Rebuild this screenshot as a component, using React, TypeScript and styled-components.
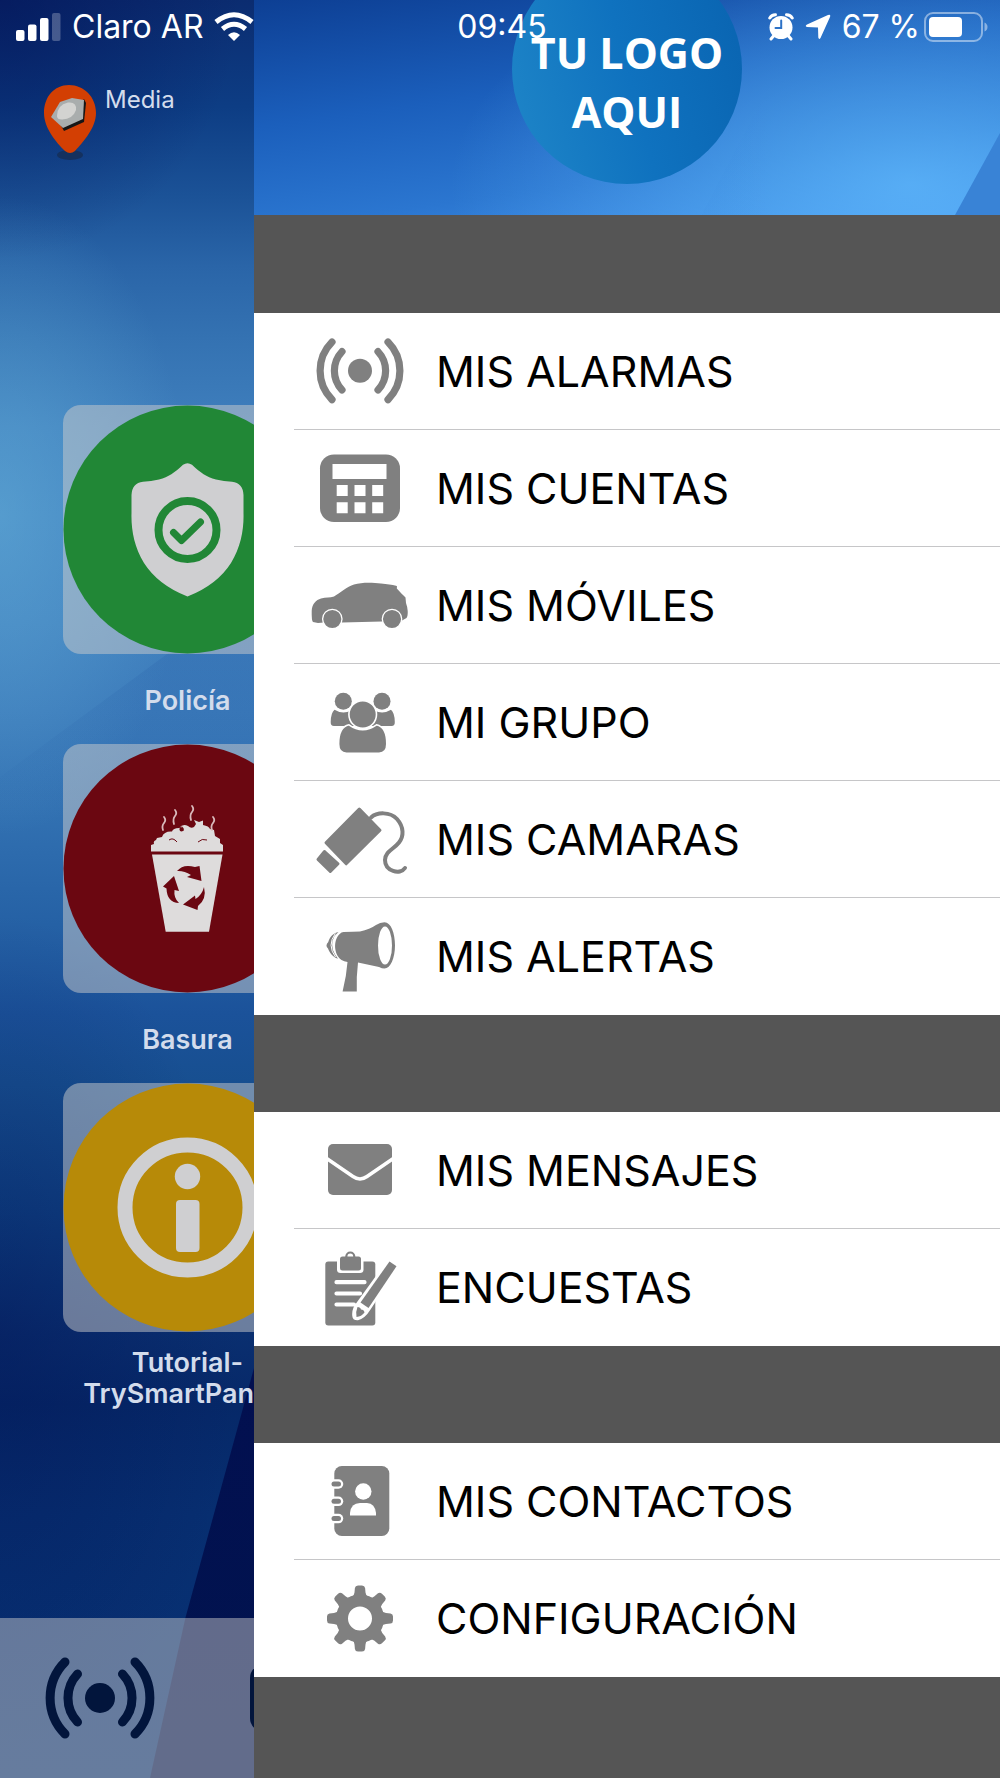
import React from "react";
import styled, { createGlobalStyle } from "styled-components";

const GREY = "#808080";
const PALE = "#cfcfd1";

const GlobalStyle = createGlobalStyle`
  * { box-sizing: border-box; }
  body { margin: 0; background: #555555; }
  body, button { font-family: Inter, "Liberation Sans", sans-serif; }
`;

const Screen = styled.div`
  position: relative;
  display: flex;
  min-height: 100vh;
  overflow: hidden;
`;

const StatusBar = styled.header`
  position: absolute;
  inset: 0 0 auto 0;
  z-index: 2;
  display: grid;
  grid-template-columns: 1fr auto 1fr;
  align-items: center;
  height: 54px;
  padding: 0 12px 0 16px;
  color: #ffffff;
  font-size: 32px;
  line-height: 36px;
`;

const StatusGroup = styled.div<{ $end?: boolean }>`
  display: flex;
  align-items: center;
  justify-content: ${(p) => (p.$end ? "flex-end" : "flex-start")};
  gap: 11px;
`;

const Charge = styled.div`
  display: flex;
  align-items: center;
  gap: 4px;
`;

const Home = styled.main`
  position: relative;
  flex: 0 0 254px;
  display: flex;
  flex-direction: column;
  overflow: hidden;
  color: #d3dcec;
  background: linear-gradient(
    180deg,
    #0b2c70 0%,
    #0d3d84 6%,
    #1b5297 11%,
    #2a65a8 15%,
    #3472b2 19%,
    #3f7fbd 24%,
    #4283c0 29%,
    #4080be 35%,
    #3b7aba 40%,
    #3170b1 46%,
    #2561a5 52%,
    #1b529a 57%,
    #174f90 61%,
    #0f4183 68%,
    #0a2f70 75%,
    #062868 79%,
    #072e70 85%,
    #083274 100%
  );
`;

const Shade = styled.div`
  position: absolute;
  inset: 0;
  background:
    radial-gradient(ellipse 190px 320px at 0 29%, rgba(104, 180, 220, 0.5), transparent),
    radial-gradient(ellipse 240px 260px at 0 0, rgba(0, 12, 80, 0.5), transparent),
    radial-gradient(ellipse 240px 420px at 0 75%, rgba(0, 14, 80, 0.35), transparent);
`;

const Streak = styled.div`
  position: absolute;
  top: 590px;
  right: 0;
  left: 0;
  height: 220px;
  background: linear-gradient(rgba(20, 70, 150, 0.18), transparent);
  clip-path: polygon(100% 0, 100% 100%, 0 100%, 0 85%);
`;

const Wedge = styled.div`
  position: absolute;
  right: 0;
  bottom: 0;
  width: 104px;
  height: 410px;
  background: linear-gradient(#020f50, #01154f);
  clip-path: polygon(100% 0, 100% 100%, 0 100%, 34% 61%);
`;

const Status = styled.div`
  position: relative;
  display: flex;
  gap: 9px;
  height: 405px;
  padding: 82px 0 0 40px;
  font-size: 24px;
  line-height: 36px;
`;

const Tiles = styled.div`
  position: relative;
  display: flex;
  flex-direction: column;
  padding-left: 63px;
`;

const Tile = styled.button`
  display: flex;
  flex-direction: column;
  width: 249px;
  padding: 0;
  border: 0;
  background: none;
  color: inherit;
  cursor: pointer;
`;

const TileFace = styled.span`
  display: block;
  height: 249px;
  border-radius: 18px;
  background: rgba(204, 204, 204, 0.5);
`;

const TileLabel = styled.span`
  display: flex;
  align-items: center;
  justify-content: center;
  width: 100%;
  height: 90px;
  padding-top: 2px;
  font-size: 27px;
  font-weight: 600;
  line-height: 31px;
  text-align: center;
`;

const Toolbar = styled.footer`
  position: relative;
  display: flex;
  align-items: center;
  gap: 95px;
  height: 160px;
  margin-top: auto;
  padding-left: 45px;
  background: rgba(204, 204, 204, 0.48);
  color: #02153c;
`;

const ToolButton = styled.button`
  display: flex;
  flex: none;
  padding: 0;
  border: 0;
  background: none;
  color: inherit;
  cursor: pointer;
`;

const Drawer = styled.aside`
  flex: 1;
  min-width: 0;
  background: #555555;
`;

const Banner = styled.div`
  position: relative;
  display: flex;
  justify-content: center;
  height: 215px;
  overflow: hidden;
  background:
    radial-gradient(ellipse 460px 240px at 88% 86%, rgba(100, 190, 255, 0.7), transparent),
    linear-gradient(172deg, #0d3f94 0%, #1b5fbc 40%, #2b76d0 72%, #3f8ee6 96%);
`;

const Ray = styled.div`
  position: absolute;
  inset: 0;
  background: linear-gradient(90deg, rgba(20, 90, 190, 0.16), transparent 70%);
  clip-path: polygon(75% 0, 100% 0, 100% 100%, 60% 100%);
`;

const Corner = styled.div`
  position: absolute;
  right: 0;
  bottom: 0;
  width: 45px;
  height: 82px;
  background: #3983d6;
  clip-path: polygon(100% 0, 100% 100%, 0 100%);
`;

const Logo = styled.div`
  position: relative;
  display: flex;
  align-items: center;
  justify-content: center;
  width: 230px;
  height: 230px;
  margin-top: -46px;
  padding-top: 26px;
  border-radius: 50%;
  background: linear-gradient(75deg, #1f86c8, #0f72bf 50%, #0963b0);
  color: #ffffff;
  font-family: "Open Sans", "Noto Sans", sans-serif;
  font-size: 43px;
  font-weight: 700;
  line-height: 59px;
  text-align: center;
`;

const Menu = styled.nav`
  display: flex;
  flex-direction: column;
  gap: 97px;
  padding: 98px 0 97px;
`;

const MenuGroup = styled.ul`
  margin: 0;
  padding: 0 0 0 40px;
  list-style: none;
  background: #ffffff;
`;

const MenuItem = styled.li`
  height: 117px;
  border-bottom: 1px solid #c6c6c8;

  &:last-child {
    border-bottom-color: transparent;
  }
`;

const MenuLink = styled.a`
  display: flex;
  align-items: center;
  gap: 10px;
  height: 100%;
  color: #000000;
  font-size: 43px;
  line-height: 54px;
  text-decoration: none;
  white-space: nowrap;
`;

const IconSlot = styled.span`
  display: flex;
  flex: none;
  justify-content: center;
  width: 132px;
  color: ${GREY};
`;

function Waves({ width }: { width: number }) {
  return (
    <svg width={width} viewBox="0 0 110 82" fill="none" stroke="currentColor" strokeWidth="9" strokeLinecap="round">
      <circle cx="55" cy="41" r="15" fill="currentColor" stroke="none" />
      <path d="M20 5A51 51 0 0 0 20 77M90 5A51 51 0 0 1 90 77M32.500 17A35 35 0 0 0 32.500 65M77.500 17A35 35 0 0 1 77.500 65" />
    </svg>
  );
}

function Glyph({ children }: { children: React.ReactNode }) {
  return (
    <svg width="100" height="80" viewBox="0 0 100 80" fill="currentColor">
      {children}
    </svg>
  );
}

const Calculator = () => (
  <Glyph>
    <rect x="10" y="6.500" width="80" height="67.500" rx="14" />
    <path
      fill="#fff"
      d="M22.500 16h54v15h-54zM26.700 37h11v11h-11zM44.500 37h11v11h-11zM62.200 37h11v11h-11zM26.700 54.300h11v11h-11zM44.500 54.300h11v11h-11zM62.200 54.300h11v11h-11z"
    />
  </Glyph>
);

const Car = () => (
  <Glyph>
    <path d="M3 57Q1.500 56 1.700 46C2 39 6 35 11 33.500C16 32.200 20 33 24 31.500C30 28 37 21.500 44 19.500C52 17 63 17.500 71 18.500C77 19 82 19.800 86 20.800L87 21.200L86.800 23.500C90 27 93 30 95.500 32.500L96 38Q97.200 41 97.700 46Q98 51 96.500 53L92 55.500L72 56.500L32 57.500L14 57.500L8 58Z" />
    <g stroke="#fff" strokeWidth="1.300">
      <circle cx="22.300" cy="54" r="9.700" />
      <circle cx="82" cy="54" r="9.700" />
    </g>
  </Glyph>
);

const Group = () => (
  <Glyph>
    <circle cx="33.300" cy="19.200" r="8.500" />
    <circle cx="72" cy="19.200" r="8.500" />
    <path d="M24.500 27.800Q33 33 41 28.500L44 44L24 44Q20.500 43.800 20.700 40Q20.800 31 24.500 27.800ZM81 27.800Q72.500 33 64.500 28.500L61.500 44L81.500 44Q85 43.800 84.800 40Q84.700 31 81 27.800Z" />
    <g stroke="#fff" strokeWidth="1.600">
      <path d="M39 42.800Q52.700 52.500 66.500 42.800Q76.800 45 76.800 62Q76.800 71.200 69 71.200H36.500Q28.600 71.200 28.600 62Q28.600 45 39 42.800Z" />
      <circle cx="52.700" cy="32.500" r="13.800" />
    </g>
  </Glyph>
);

const Camera = () => (
  <Glyph>
    <g stroke="currentColor" strokeWidth="3" strokeLinejoin="round">
      <path d="M49.300 10L70 31.300L36.200 64.800L16 43.800Z" />
      <path d="M14.500 52.500L28 64.800L20.300 72.500L8 60.500Z" />
    </g>
    <path
      d="M61 18.500C67 13 80 12.500 87 20C94 28 94 37 89 43.500C84 50 75.500 52 75 61C75 72 90 76.500 95 69"
      fill="none"
      stroke="currentColor"
      strokeWidth="4"
      strokeLinecap="round"
    />
  </Glyph>
);

const Megaphone = () => (
  <Glyph>
    <path d="M31.500 16.500Q34 15.800 50 15.600Q60 13 66 9Q70 6.200 74.500 6.200C81 6.200 85 17 85 29.500S80.500 52.500 74.500 52.500Q72 52.500 69 51L48 46.500Q46.300 60 46.800 75.500H32.600Q36.500 60 37.500 46Q34 45.600 31.500 44C23 38 23 22 31.500 16.500Z" />
    <ellipse cx="75" cy="29.500" rx="7" ry="19" fill="#fff" />
    <path d="M28.500 16C21 17.500 19 24 18.300 26Q14.800 29.500 18 32.500C19.500 36.500 22.500 41 28 42.700L25 38.500Q19.500 29 24.500 20Z" />
    <path d="M25.300 17.500Q16.700 29.300 25.500 41" fill="none" stroke="#fff" strokeWidth="1" />
  </Glyph>
);

const Envelope = () => (
  <Glyph>
    <rect x="18" y="14" width="64" height="51" rx="5" />
    <path d="M16 28L43 46.500Q50 51.500 57 46.500L84 28" fill="none" stroke="#fff" strokeWidth="3.500" />
  </Glyph>
);

const Survey = () => (
  <Glyph>
    <rect x="15.300" y="14.500" width="50" height="64" rx="3" />
    <path d="M27 12V22.500Q27 26 30.500 26H50Q53.500 26 53.500 22.500V12Z" fill="#fff" />
    <rect x="30" y="9.500" width="21" height="14" rx="2.500" />
    <circle cx="40.300" cy="9.500" r="4" fill="none" stroke="currentColor" strokeWidth="2.200" />
    <path d="M26.500 35.200H54.500M26.500 46.500H50M26.500 57.500H44" stroke="#fff" strokeWidth="4.200" strokeLinecap="round" />
    <path d="M77.500 13L88.500 20L60.500 62.500Q55 71.500 48 73.200Q42.500 73.500 42.300 69Q41.500 62 46 56.500Z" fill="#fff" />
    <path d="M79.500 14.500L86.500 19.300L58.500 61L50.500 55.500Z" />
    <path d="M47.500 60Q50.500 60 51 62.500Q54 62.500 54.500 65.500Q51.500 69.500 46.500 70Q45.500 64.500 47.500 60Z" />
  </Glyph>
);

const Contacts = () => (
  <Glyph>
    <rect x="24.300" y="5" width="55" height="70" rx="7.500" />
    <circle cx="53.300" cy="30.500" r="8.200" fill="#fff" />
    <path d="M40 54.500V52Q41 42 50 42H57Q65 42.500 66 52V54.500Z" fill="#fff" />
    {[23, 40.3, 57.6].map((y) => (
      <g key={y} strokeLinecap="round">
        <path d={`M24 ${y}H28.500`} stroke="#fff" strokeWidth="9.500" />
        <path d={`M24 ${y}H28.500`} stroke="currentColor" strokeWidth="5" />
      </g>
    ))}
  </Glyph>
);

const Gear = () => (
  <Glyph>
    <circle cx="50" cy="40.500" r="18" fill="none" stroke="currentColor" strokeWidth="12" />
    {[0, 45, 90, 135, 180, 225, 270, 315].map((angle) => (
      <path
        key={angle}
        transform={`rotate(${angle} 50 40.500)`}
        d="M41.500 19.500Q44.300 17.500 44.500 14.500L44.900 10Q45.300 7.500 48 7.500H52Q54.700 7.500 55.100 10L55.500 14.500Q55.700 17.500 58.500 19.500L55 25H45Z"
      />
    ))}
  </Glyph>
);

const Police = () => (
  <svg width="249" height="249" viewBox="0 0 249 249" fill="none">
    <circle cx="124.500" cy="124.500" r="124" fill="#218736" />
    <path
      fill={PALE}
      d="M120 59.800Q124.500 56.500 129 59.800C138 68 143 72 153 74.500Q161 76.500 169 76.700Q180 78 180.500 90V108C181 124 178 142 168 158Q154 180 124.500 191.500Q95 180 81 158C71 142 68 124 68.500 108V90Q69 78 80 76.700Q88 76.500 96 74.500C106 72 111 68 120 59.800Z"
    />
    <circle cx="124.500" cy="125" r="29" stroke="#218736" strokeWidth="8" />
    <path d="M110.500 127.500L118.500 135.500L137.500 117" stroke="#218736" strokeWidth="7" strokeLinecap="round" strokeLinejoin="round" />
  </svg>
);

const Trash = () => (
  <svg width="249" height="249" viewBox="0 0 249 249" fill="none">
    <circle cx="124.500" cy="124.500" r="124" fill="#6b0711" />
    <path fill="#dedcdc" d="M89 110.500H159.500L146 187.700H102.700Z" />
    <path
      fill="#dedcdc"
      d="M88 107.500V101L91 100Q90 97 93 96L94 94L99 93Q101 87 109 87.500Q110 84 116 84Q120 79 125 82Q128 85 131 83L133 80L131 76L136 78L140 76.500V81Q146 82 147 85L151 86L152 92L157 95V99L160 101V107.500Z"
    />
    <path d="M116 84Q121 81 120 87M106 96Q110 93 114 98M135 98Q139 94 144 96" stroke="#6b0711" strokeWidth="1" />
    <circle cx="118.500" cy="85.500" r="2" fill="#6b0711" />
    <path
      d="M101 73q2.500 3 0 6t-1 7M112 66q2.500 3 0 6t-1 8M129 62q2.500 3 0 6t-1 8M150 73q2.500 3 0 6t-1 7"
      stroke="#d8b9bb"
      strokeWidth="1.800"
      strokeLinecap="round"
    />
    <path
      fill="#6b0711"
      d="M114 127Q120 119.500 132 123L136.500 122L138.500 137L124 133L128 131Q121 126.500 114 127ZM141 143Q144 155 135 162L134.500 166L120 160.500L132 151.500L132.500 155Q139 151 141 143ZM100 142.500L111 132L116 147L111.500 146Q110.500 154 116 159Q104 158.500 103.500 144.500Z"
    />
  </svg>
);

const Info = () => (
  <svg width="249" height="249" viewBox="0 0 249 249">
    <circle cx="124.500" cy="124.500" r="124" fill="#b78a08" />
    <circle cx="124.500" cy="124.500" r="62.500" fill="none" stroke={PALE} strokeWidth="15" />
    <circle cx="124.500" cy="93.500" r="12.700" fill={PALE} />
    <rect x="113" y="117" width="23.500" height="52" rx="4" fill={PALE} />
  </svg>
);

const Pin = () => (
  <svg width="56" height="80" viewBox="0 0 56 80">
    <ellipse cx="30" cy="73" rx="13" ry="5" fill="#14315f" />
    <path d="M29 3C44 3 56 15 56 31C56 46 43 60 35 69Q30 73 25 69C16 60 4 46 4 31C4 15 14 3 29 3Z" fill="#d33f03" />
    <path d="M20 42L24 49L44 40L46 21L44 17Z" fill="#161616" />
    <path d="M11 35L20 20L32 16L44 18L43 37L23 46Z" fill="#a9adad" />
    <path d="M17 34Q17 23 28 20.500Q37 19.500 36 28Q33 37 22 37.500Q17 37.500 17 34Z" fill="#d3d3d1" />
  </svg>
);

const Signal = () => (
  <svg width="45" height="30" viewBox="0 0 45 30" fill="#fff">
    <rect x="0" y="18" width="8.500" height="11" rx="2" />
    <rect x="12" y="12.500" width="8.500" height="16.500" rx="2" />
    <rect x="24" y="6" width="8.500" height="23" rx="2" />
    <rect x="36" y="1" width="8.500" height="28" rx="2" opacity="0.250" />
  </svg>
);

const Wifi = () => (
  <svg width="40" height="30" viewBox="0 0 40 30" fill="none" stroke="#fff" strokeWidth="5">
    <path d="M2 10Q20 -4.500 38 10" />
    <path d="M8.500 17Q20 7.500 31.500 17" />
    <path d="M14 23Q20 17.500 26 23L20 29Z" fill="#fff" stroke="none" />
  </svg>
);

const AlarmClock = () => (
  <svg width="26" height="28" viewBox="0 0 26 28" fill="none" stroke="#fff" strokeLinecap="round">
    <circle cx="13" cy="14.500" r="11.500" fill="#fff" stroke="none" />
    <path d="M1.800 5Q3.500 2 7.500 1.800M24.200 5Q22.500 2 18.500 1.800" strokeWidth="3" />
    <path d="M5.500 23L3 26M20.500 23L23 26" strokeWidth="3" />
    <path d="M13.200 7.500V15H7.500" stroke="#2d72c6" strokeWidth="2" />
  </svg>
);

const Locator = () => (
  <svg width="26" height="26" viewBox="0 0 26 26" fill="#fff">
    <path d="M23 1Q26 0 25 3L15.500 24Q14 26 13.300 23.500L13 13.500L2 13Q-.500 12 2 10.500Z" />
  </svg>
);

const Battery = () => (
  <svg width="64" height="30" viewBox="0 0 64 30" fill="none">
    <rect x="1" y="1" width="57" height="28" rx="8" stroke="#fff" strokeOpacity="0.450" strokeWidth="2" />
    <rect x="5" y="5" width="33" height="20" rx="4" fill="#fff" />
    <path d="M60.500 10.500Q63.500 12 63.500 15T60.500 19.500Z" fill="#fff" fillOpacity="0.450" />
  </svg>
);

const PanelIcon = () => (
  <svg width="90" height="68" viewBox="0 0 90 68" fill="currentColor">
    <rect width="90" height="68" rx="14" />
  </svg>
);

const tiles = [
  { label: "Policía", icon: <Police /> },
  { label: "Basura", icon: <Trash /> },
  { label: "Tutorial-TrySmartPanics", icon: <Info /> },
];

const groups = [
  [
    { label: "MIS ALARMAS", icon: <Waves width={88} /> },
    { label: "MIS CUENTAS", icon: <Calculator /> },
    { label: "MIS MÓVILES", icon: <Car /> },
    { label: "MI GRUPO", icon: <Group /> },
    { label: "MIS CAMARAS", icon: <Camera /> },
    { label: "MIS ALERTAS", icon: <Megaphone /> },
  ],
  [
    { label: "MIS MENSAJES", icon: <Envelope /> },
    { label: "ENCUESTAS", icon: <Survey /> },
  ],
  [
    { label: "MIS CONTACTOS", icon: <Contacts /> },
    { label: "CONFIGURACIÓN", icon: <Gear /> },
  ],
];

export default function App() {
  return (
    <Screen>
      <GlobalStyle />
      <StatusBar>
        <StatusGroup>
          <Signal />
          <span>Claro AR</span>
          <Wifi />
        </StatusGroup>
        <span>09:45</span>
        <StatusGroup $end>
          <AlarmClock />
          <Locator />
          <Charge>
            <span>67 %</span>
            <Battery />
          </Charge>
        </StatusGroup>
      </StatusBar>

      <Home>
        <Shade />
        <Streak />
        <Wedge />
        <Status>
          <Pin />
          <span>Media</span>
        </Status>
        <Tiles>
          {tiles.map((tile) => (
            <Tile key={tile.label} type="button">
              <TileFace>{tile.icon}</TileFace>
              <TileLabel>{tile.label}</TileLabel>
            </Tile>
          ))}
        </Tiles>
        <Toolbar>
          <ToolButton type="button" aria-label="Alarmas">
            <Waves width={110} />
          </ToolButton>
          <ToolButton type="button" aria-label="Cuentas">
            <PanelIcon />
          </ToolButton>
        </Toolbar>
      </Home>

      <Drawer>
        <Banner>
          <Ray />
          <Corner />
          <Logo>
            <span>
              TU LOGO
              <br />
              AQUI
            </span>
          </Logo>
        </Banner>
        <Menu>
          {groups.map((items) => (
            <MenuGroup key={items[0].label}>
              {items.map((item) => (
                <MenuItem key={item.label}>
                  <MenuLink href="#">
                    <IconSlot>{item.icon}</IconSlot>
                    {item.label}
                  </MenuLink>
                </MenuItem>
              ))}
            </MenuGroup>
          ))}
        </Menu>
      </Drawer>
    </Screen>
  );
}
